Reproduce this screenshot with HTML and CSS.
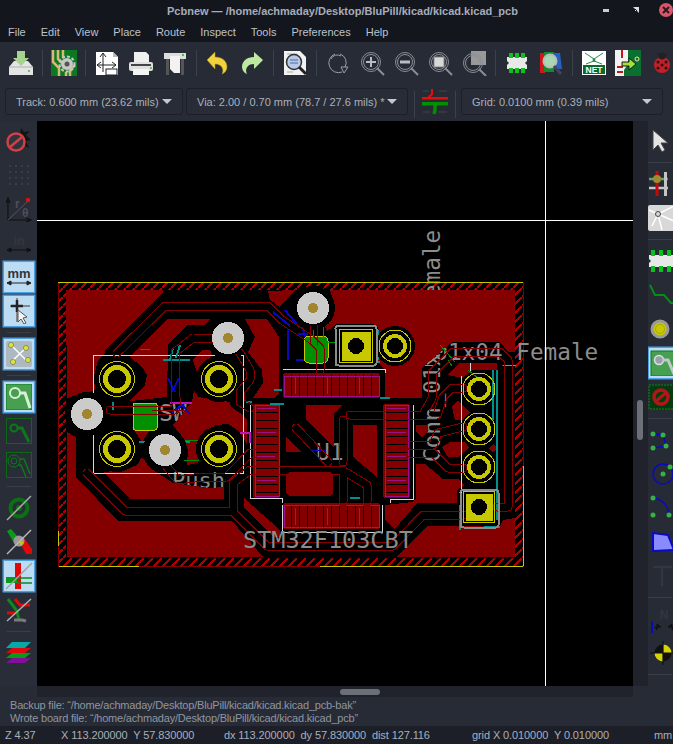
FILE: index.html
```html
<!DOCTYPE html>
<html lang="en">
<head>
    <meta charset="UTF-8">
    <meta name="viewport" content="width=device-width, initial-scale=1.0">
    <title>Pcbnew</title>
    <link rel="stylesheet" href="styles.css">
</head>
<body>
<svg class="defs" width="0" height="0">
    <defs>
        <g id="ring">
            <circle cx="11" cy="11" r="9.5" fill="none" stroke="#8a8e96" stroke-width="1"/>
            <circle cx="11" cy="11" r="7.5" fill="none" stroke="#8a8e96" stroke-width="1"/>
            <path d="M17 17L24 24" stroke="#8a8e96" stroke-width="2"/>
        </g>
        <pattern id="hatch" width="9" height="9" patternUnits="userSpaceOnUse">
            <path class="hatchline" d="M0 9L9 0"/>
        </pattern>
        <g id="tracks">
            <path d="M117 353L165 306H268L282 320L312 340L320 348V370"/>
            <path d="M193 338H214M193 338L175 352V400M110 410H175L177 400"/>
            <path d="M240 353L250 370V380L240 392V402L250 408"/>
            <path d="M87 473L125 511H233V483L250 470H342L367 485V502M343 462V420M296 428L328 462M343 470V502"/>
            <path d="M233 512L267 546H393L423 515H463"/>
            <path d="M410 445H433L438 433L463 427M410 453H433L448 468H463"/>
            <path d="M350 415H423L432 398V373L453 352H500L508 360V507H497"/>
            <path d="M410 415H437L443 397L452 388H463"/>
            <path d="M167 467L178 480L203 477H227L250 453H275"/>
        </g>
        <mask id="trackmask" maskUnits="userSpaceOnUse" x="37" y="121" width="596" height="565">
            <use href="#tracks" class="mask-outer"/>
            <use href="#tracks" class="mask-inner"/>
        </mask>
    </defs>
</svg>

<div class="window">
    <div class="titlebar">
        <span class="title">Pcbnew — /home/achmaday/Desktop/BluPill/kicad/kicad.kicad_pcb</span>
        <span class="wm wm-min"></span>
        <span class="wm wm-max"></span>
        <span class="wm wm-close">
            <svg width="8" height="8" viewBox="0 0 8 8"><path d="M1 1L7 7M7 1L1 7" stroke="#2a1a20" stroke-width="2"/></svg>
        </span>
    </div>
    <div class="menubar">
        <span>File</span><span>Edit</span><span>View</span><span>Place</span><span>Route</span><span>Inspect</span><span>Tools</span><span>Preferences</span><span>Help</span>
    </div>

    <div class="toolbar">
        <div class="tool"><svg width="26" height="26" viewBox="0 0 26 26"><path d="M1 17L6 11H20L25 17V25H1Z" fill="#e4e4e4"/><path d="M1 17H25" stroke="#b0b0b0"/><path d="M9 1H17V8H21L13 16L5 8H9Z" fill="#a6d48e"/><rect x="20" y="20" width="2" height="2" fill="#6cc070"/></svg></div>
        <i class="sep"></i>
        <div class="tool"><svg width="26" height="26" viewBox="0 0 26 26"><rect width="26" height="26" fill="#0a7a22"/><path d="M2 0V12L8 18V26M7 0V9L12 14M12 0V7M19 26V20L24 15M15 26V22" stroke="#d8b878" stroke-width="2.5" fill="none"/><circle cx="16" cy="14" r="6" fill="#c8c8c8"/><circle cx="16" cy="14" r="7.5" fill="none" stroke="#c8c8c8" stroke-width="2" stroke-dasharray="3 2"/><circle cx="16" cy="14" r="2.5" fill="#555"/></svg></div>
        <i class="sep"></i>
        <div class="tool"><svg width="24" height="25" viewBox="0 0 24 25"><path d="M1 1H18L23 6V24H1Z" fill="#fff"/><path d="M18 1V6H23" fill="#bbb"/><path d="M8 2V21M2 14H21M8 2L5 6M8 2L11 6M2 14L6 11M2 14L6 17M21 14L17 11M21 14L17 17" stroke="#222" fill="none"/><rect x="11" y="18" width="11" height="6" fill="none" stroke="#222"/></svg></div>
        <div class="tool"><svg width="26" height="25" viewBox="0 0 26 25"><path d="M6 1H18L21 4V12H6Z" fill="#f0f0f0"/><rect x="1" y="11" width="24" height="9" rx="2" fill="#e0e0e0"/><rect x="5" y="18" width="16" height="6" fill="#f4f4f4"/><rect x="3" y="13" width="20" height="2" fill="#444"/><rect x="22" y="16" width="2" height="2" fill="#5c5"/></svg></div>
        <div class="tool"><svg width="24" height="25" viewBox="0 0 24 25"><rect x="1" y="2" width="22" height="6" fill="#ddd"/><rect x="3" y="8" width="3" height="16" fill="#555"/><rect x="18" y="8" width="3" height="16" fill="#555"/><path d="M7 5H17V22H11L7 18Z" fill="#f2f2f2"/><rect x="19" y="3" width="2" height="2" fill="#3c3"/></svg></div>
        <i class="sep"></i>
        <div class="tool"><svg width="22" height="24" viewBox="0 0 22 24"><path d="M8 1V6C15 6 20 10 20 16C20 19 18 22 15 23C17 20 16 13 8 13V18L0 9Z" fill="#f2d23c" stroke="#a89020" stroke-width=".5"/></svg></div>
        <div class="tool"><svg width="24" height="24" viewBox="0 0 24 24"><path d="M14 1V6C7 6 2 10 2 16C2 19 4 22 7 23C5 20 6 13 14 13V18L23 9Z" fill="#bfe8a0"/></svg></div>
        <i class="sep"></i>
        <div class="tool"><svg width="25" height="26" viewBox="0 0 25 26"><path d="M1 1H17L23 7V25H1Z" fill="#f2f2f2"/><path d="M4 4H14M4 22H10" stroke="#aaa"/><circle cx="11" cy="12" r="7.5" fill="#b8c8e8" stroke="#333" stroke-width="1.5"/><path d="M7 10H15M7 13H15" stroke="#5068a0"/><path d="M16 17L23 24" stroke="#222" stroke-width="3"/></svg></div>
        <i class="sep"></i>
        <div class="tool dim"><svg width="22" height="24" viewBox="0 0 22 24"><path d="M8 3A9 9 0 1 0 15 21M13 3A9 9 0 0 1 18 16M4 8A7 7 0 0 1 14 5" fill="none" stroke="#9a9ea6"/><path d="M14 16H21L17 22Z" fill="none" stroke="#9a9ea6"/></svg></div>
        <div class="tool dim"><svg width="25" height="25" viewBox="0 0 25 25"><use href="#ring"/><path d="M6 11H16M11 6V16" stroke="#b8bcc4" stroke-width="2"/></svg></div>
        <div class="tool dim"><svg width="25" height="25" viewBox="0 0 25 25"><use href="#ring"/><path d="M6 11H16" stroke="#b8bcc4" stroke-width="3"/></svg></div>
        <div class="tool dim"><svg width="25" height="25" viewBox="0 0 25 25"><use href="#ring"/><rect x="6" y="6" width="10" height="10" fill="#d8d8d8" stroke="#888"/></svg></div>
        <div class="tool dim"><svg width="25" height="25" viewBox="0 0 25 25"><rect x="9" y="0" width="15" height="14" fill="#999"/><use href="#ring" y="1"/></svg></div>
        <i class="sep"></i>
        <div class="tool"><svg width="24" height="22" viewBox="0 0 24 22"><path d="M2 5H22V9L20 11L22 13V17H2V13L4 11L2 9Z" fill="#e8e8e8"/><path d="M4 1H8V6H4ZM10 1H14V6H10ZM16 1H20V6H16ZM4 16H8V21H4ZM10 16H14V21H10ZM16 16H20V21H16Z" fill="#0fc01e"/></svg></div>
        <div class="tool"><svg width="24" height="25" viewBox="0 0 24 25"><rect x="1" y="2" width="5" height="20" fill="#d01818"/><rect x="5" y="1" width="10" height="20" fill="#148a30"/><path d="M15 2H21L23 18H15Z" fill="#2860c0"/><circle cx="11" cy="10" r="6.5" fill="#a8d8b0" stroke="#bbb" stroke-width="2"/><path d="M15 15L22 23" stroke="#445" stroke-width="3"/></svg></div>
        <i class="sep"></i>
        <div class="tool"><svg width="24" height="24" viewBox="0 0 24 24"><rect width="24" height="24" fill="#fff"/><path d="M3 2L12 8L21 2M12 8V11M4 13L12 10L20 13" stroke="#2a8a4a" fill="none"/><circle cx="12" cy="9" r="1.5" fill="#2a8a4a"/><rect x="1" y="14" width="22" height="9" fill="#0a6a2a"/><text x="12" y="22" class="net">NET</text></svg></div>
        <div class="tool"><svg width="26" height="26" viewBox="0 0 26 26"><rect width="26" height="26" fill="#f2f2f2"/><path d="M13 0H26V26H9V20L13 14Z" fill="#0a7030"/><path d="M7 0V8M2 17H8M2 22H8" stroke="#c01818" stroke-width="2"/><path d="M7 12H14V8L21 14L14 20V16H7Z" fill="#9ee23c" stroke="#1a1a1a"/><circle cx="22" cy="9" r="2" fill="none" stroke="#e8e8a0"/></svg></div>
        <div class="tool"><svg width="18" height="24" viewBox="0 0 18 24"><path d="M3 2L6 5M15 2L12 5M1 12H3M15 12H17M1 18L3 16M17 18L15 16" stroke="#222"/><circle cx="9" cy="14" r="8" fill="#c02028"/><circle cx="9" cy="5" r="3.5" fill="#222"/><g fill="#2a1010"><circle cx="5" cy="11" r="1.5"/><circle cx="13" cy="11" r="1.5"/><circle cx="5" cy="17" r="1.5"/><circle cx="13" cy="17" r="1.5"/><circle cx="9" cy="14" r="1.5"/></g></svg></div>
    </div>

    <div class="auxbar">
        <div class="combo combo-track"><span>Track: 0.600 mm (23.62 mils)</span><b class="caret"></b></div>
        <div class="combo combo-via"><span>Via: 2.00 / 0.70 mm (78.7 / 27.6 mils) *</span><b class="caret"></b></div>
        <i class="sep sep-aux"></i>
        <div class="route-width"><svg width="28" height="28" viewBox="0 0 28 28"><path d="M11 1V6L7 10" stroke="#e01010" stroke-width="2" fill="none"/><rect x="1" y="9" width="26" height="2.5" fill="#e01010"/><rect x="1" y="14" width="26" height="3.5" fill="#009000"/><path d="M14 17L14 22L13 26" stroke="#009000" stroke-width="3.5" fill="none"/><path d="M2 3H8M18 3H26M2 24H9M17 24H26" stroke="#444" /></svg></div>
        <i class="sep sep-aux"></i>
        <div class="combo combo-grid"><span>Grid: 0.0100 mm (0.39 mils)</span><b class="caret"></b></div>
    </div>

    <div class="main">
        <div class="sidebar">
            <div class="side-btn"><svg width="28" height="26" viewBox="0 0 28 26"><path d="M16 0L19 4L25 3L21 7L26 12L21 13L24 20L18 17L14 20Z" fill="#141414"/><circle cx="11" cy="14" r="8.5" fill="#30343e" stroke="#d04046" stroke-width="2.5"/><path d="M5 19L17 9" stroke="#d04046" stroke-width="2.5"/></svg></div>
            <div class="side-btn"><svg class="faint" width="24" height="24" viewBox="0 0 24 24"><g fill="#555"><circle cx="3" cy="3" r="1"/><circle cx="9" cy="3" r="1"/><circle cx="15" cy="3" r="1"/><circle cx="21" cy="3" r="1"/><circle cx="3" cy="9" r="1"/><circle cx="9" cy="9" r="1"/><circle cx="15" cy="9" r="1"/><circle cx="21" cy="9" r="1"/><circle cx="3" cy="15" r="1"/><circle cx="9" cy="15" r="1"/><circle cx="15" cy="15" r="1"/><circle cx="21" cy="15" r="1"/><circle cx="3" cy="21" r="1"/><circle cx="9" cy="21" r="1"/><circle cx="15" cy="21" r="1"/><circle cx="21" cy="21" r="1"/></g></svg></div>
            <div class="side-btn"><svg width="26" height="26" viewBox="0 0 26 26"><path d="M2 24V2M2 24H25M0 7L2 2L4 7M20 22L25 24L20 26" stroke="#111" stroke-width="1.2" fill="none"/><path d="M2 24L21 6" stroke="#555"/><circle cx="22" cy="4" r="2.2" fill="#e01010"/><text x="9" y="12" class="polar">r</text><text x="16" y="21" class="polar">θ</text></svg></div>
            <div class="side-btn"><svg width="26" height="26" viewBox="0 0 26 26"><text x="13" y="15" class="unit unit-dim">in</text><path d="M1 20H25M1 20L5 18V22ZM25 20L21 18V22Z" stroke="#111" fill="#111"/></svg></div>
            <div class="side-btn on"><svg width="26" height="26" viewBox="0 0 26 26"><text x="13" y="14" class="unit">mm</text><path d="M1 19H25M1 19L5 17V21ZM25 19L21 17V21Z" stroke="#222" fill="#222"/></svg></div>
            <div class="side-btn on"><svg width="26" height="26" viewBox="0 0 26 26"><path d="M4 8H24M11 0V24" stroke="#888" stroke-width="2"/><path d="M5 8H17M11 2V14" stroke="#222" stroke-width="2.5"/><path d="M12 12L12 24L15 21L18 26L20 25L17 20L21 19Z" fill="#f4f4f4" stroke="#555"/></svg></div>
            <i class="hsep"></i>
            <div class="side-btn on"><svg width="28" height="28" viewBox="0 0 28 28"><rect x="1" y="1" width="26" height="26" rx="2" fill="#aeb8c0"/><path d="M6 5L22 21M7 21L22 7" stroke="#fff" stroke-width="1.5"/><g fill="#d8e830" stroke="#555" stroke-width=".5"><circle cx="6" cy="5" r="2.6"/><circle cx="21" cy="8" r="2.6"/><circle cx="8" cy="22" r="2.6"/><circle cx="23" cy="20" r="2.6"/></g></svg></div>
            <i class="hsep"></i>
            <div class="side-btn on"><svg width="26" height="26" viewBox="0 0 26 26"><rect width="26" height="26" fill="#46a050" stroke="#0a7a20"/><circle cx="9" cy="9" r="5" fill="none" stroke="#d8f0d8" stroke-width="2"/><path d="M14 9H19L24 24" fill="none" stroke="#d8f0d8" stroke-width="3"/></svg></div>
            <div class="side-btn"><svg width="26" height="26" viewBox="0 0 26 26"><rect x=".5" y=".5" width="25" height="25" fill="none" stroke="#0a6a12"/><circle cx="8" cy="10" r="3.5" fill="none" stroke="#0a7a18" stroke-width="2"/><path d="M12 10H16L23 24" fill="none" stroke="#0a7a18" stroke-width="3"/></svg></div>
            <div class="side-btn"><svg width="26" height="26" viewBox="0 0 26 26"><rect x=".5" y=".5" width="25" height="25" fill="none" stroke="#0a6a12"/><circle cx="8" cy="9" r="3" fill="none" stroke="#0a7a18"/><circle cx="8" cy="9" r="6" fill="none" stroke="#0a7a18"/><path d="M14 7H18L24 22M12 13H15L20 25" fill="none" stroke="#0a7a18" stroke-width="1.5"/></svg></div>
            <i class="hsep"></i>
            <div class="side-btn"><svg width="26" height="26" viewBox="0 0 26 26"><circle cx="13" cy="13" r="8.5" fill="none" stroke="#0a7012" stroke-width="4"/><circle cx="13" cy="13" r="3" fill="#0a7012"/><path d="M1 25L25 1" stroke="#a8a8a8" stroke-width="1.5"/></svg></div>
            <div class="side-btn"><svg width="28" height="26" viewBox="0 0 28 26"><path d="M2 2L6 0L14 9L9 14Z" fill="#0a9a18"/><path d="M15 14L19 9L27 20V25H21Z" fill="#e00808"/><circle cx="14" cy="12" r="5.5" fill="#9a9a9a"/><path d="M14 12L19 13L16 17Z" fill="#c8c800"/><path d="M2 25L26 1" stroke="#b8b8b8" stroke-width="1.5"/></svg></div>
            <div class="side-btn on"><svg width="28" height="28" viewBox="0 0 28 28"><rect x="10" y="1" width="6" height="26" fill="#e00808"/><rect x="1" y="15" width="11" height="6" fill="#0a9a18"/><path d="M12 16H27M12 21H27" stroke="#0a8a18" stroke-width="1.5"/><path d="M1 27L27 1" stroke="#a0a0a0" stroke-width="1.5"/></svg></div>
            <div class="side-btn"><svg width="26" height="26" viewBox="0 0 26 26"><path d="M2 2L11 14L13 24" fill="none" stroke="#0a8a18" stroke-width="3"/><path d="M9 2L14 8H24" fill="none" stroke="#e00808" stroke-width="3"/><path d="M1 16H9" stroke="#e00808" stroke-width="3"/><path d="M8 23H16L20 24" fill="none" stroke="#7a7a7a" stroke-width="3"/><path d="M1 24L25 2" stroke="#b0b0b0" stroke-width="1.5"/></svg></div>
            <i class="hsep"></i>
            <div class="side-btn"><svg width="28" height="26" viewBox="0 0 28 26"><path d="M1 23L7 18H26L20 23Z" fill="#80109a"/><path d="M1 18L7 13H26L20 18Z" fill="#0a9a18"/><path d="M1 13L7 8H26L20 13Z" fill="#e00808"/><path d="M1 8L7 2H26L20 8Z" fill="#08a8a8"/></svg></div>
        </div>

        <div class="canvas">
            <svg class="board" width="596" height="565" viewBox="37 121 596 565">
                <path class="hatchfill" fill-rule="evenodd" d="M58 282H523V567H58ZM66 290H515V558H66Z"/>
                <rect class="edge" x="58.5" y="282.5" width="465" height="284"/>

                <!-- silk text under the copper -->
                <text class="silk silk-value" x="366" y="360">Conn_01x04_Female</text>
                <text class="silk silk-value" transform="translate(440 462) rotate(-90)">Conn_01x04_Female</text>
                <text class="silk silk-ref" x="316" y="460">U1</text>
                <text class="silk silk-ref" x="159" y="421">SW</text>
                <text class="silk silk-push" x="172" y="488">Push</text>

                <!-- copper fills -->
                <g class="cu">
                    <path d="M66 290H163V293L105 350V353L98 360L95 372L95 390L67 398Z"/>
                    <path d="M67 432L76 437V477L118 521H232L263 557H67Z"/>
                    <path d="M397 557L427 526H500L503 520L515 518V557Z"/>
                    <path d="M167 319H210L205 325H187L168 345L167 397L130 401L145 385L147 375L142 367L130 357Z"/>
                    <path d="M193 360L202 350H210L212 355L197 373ZM194 390L198 397L230 402L231 407L240 413L247 420V445L240 432L228 424L215 425L205 435L198 463L187 465L188 450L183 438L173 425L183 413L192 402Z"/>
                    <path d="M132 427H152L142 442Z"/>
                    <path d="M103 472L125 470L137 465L142 457L150 468L173 483L210 488L224 487V499H130Z"/>
                    <path d="M244 498L280 530V537H273L244 507Z"/>
                    <path d="M245 319H267L279 337V393L274 398H253L263 383L262 370L248 352L255 337Z"/>
                    <path d="M268 291L295 290L280 307L270 300Z"/>
                    <path d="M330 290H515V352H508L500 342H452L422 368V398H385V370L378 362V327L373 324H337L327 331L325 327L335 307Z"/>
                    <path d="M447 375L460 363H497V370H473L462 378Z"/>
                    <path d="M452 407L458 400L470 413L462 420H455Z"/>
                    <path d="M442 447L450 442H465L469 448L458 457H448Z"/>
                    <path d="M489 448L493 444L497 448L493 453Z"/>
                    <path d="M416 425H428V432L422 437L416 432Z"/>
                    <path d="M416 464H425L443 479H458L465 485L457 490V503H417L395 529L385 520V505L413 502L416 498Z"/>
                    <path d="M353 425H377V477L353 457Z"/>
                    <path d="M306 405H342L334 413V448L306 420Z"/>
                    <path d="M289 472H330L333 475V493L330 496H289L286 493V475Z"/>
                    <path d="M286 437L302 452H286Z"/>
                </g>

                <!-- QFP pad rows -->
                <rect class="cu" x="283" y="373" width="97" height="25" rx="3"/>
                <rect class="cu" x="283" y="503" width="97" height="26" rx="3"/>
                <rect class="cu" x="253" y="404" width="27" height="94" rx="3"/>
                <rect class="cu" x="383" y="404" width="27" height="94" rx="3"/>
                <path class="gap-v" d="M291 385.5H380M291 516H380"/>
                <path class="gap-h" d="M266.5 412V498M396.5 412V498"/>
                <path class="lead-v" d="M295 385.5H380M295 516H380"/>
                <path class="lead-h" d="M266.5 408V498M396.5 408V498"/>
                <path class="purple" d="M284 376H379V396H284ZM284 505H379V527H284ZM255 405H279V496H255ZM385 405H408V496H385Z"/>

                <!-- F.Silk courtyard lines -->
                <g class="white">
                    <path d="M93 473V355H243V473Z"/>
                    <path d="M283 369H385V373M282 532H382V505M282 532V505M250 405V498H282V503M413 405V499H390V503"/>
                    <path d="M470 363V372M461 376V527M497 370V520"/>
                </g>

                <!-- teal / blue back-side graphics -->
                <g class="teal">
                    <path d="M173 348L170 360M180 345L176 358M163 360H190M113 400V410M115 427V450M139 442H190M270 404H284M380 362H340M378 330V360M282 390H274M380 398H390M252 402H246M350 498H360M493 370V420M497 370V520M484 527H500M460 505V530"/>
                </g>
                <g class="bluesilk">
                    <path d="M168 378L175 392M179 378L172 392M273 312L290 326M285 310L300 328M300 320L306 338M298 334H307V360H296M172 412L182 405L190 414M288 330V360"/>
                </g>
                <path class="bluedim" d="M311 450H325M319 446V458"/>
                <g class="magenta">
                    <path d="M170 403H192M240 433H250V443"/>
                </g>
                <rect class="greenpad" x="304" y="336" width="24" height="27" rx="5"/>
                <rect class="greenpad" x="133" y="403" width="24" height="27" rx="2"/>
                <g class="greenline">
                    <path d="M243 333H232M243 342H232M206 386H228M206 392H228M140 349H150M157 460H210M183 440H205M313 325V340M323 325V340M328 342H345M440 345L455 362M448 360L452 366M468 370L478 378"/>
                </g>

                <!-- through hole pads and vias -->
                <g class="clear">
                    <circle cx="117" cy="379" r="23"/><circle cx="219" cy="379" r="23"/>
                    <circle cx="117" cy="449" r="23"/><circle cx="219" cy="449" r="23"/>
                    <circle cx="87" cy="414" r="22"/><circle cx="228" cy="338" r="22"/>
                    <circle cx="165" cy="450" r="22"/><circle cx="313" cy="308" r="22"/>
                    <circle cx="395" cy="346" r="20"/><rect x="336" y="326" width="40" height="40" rx="4"/>
                </g>

                <!-- tracks, drawn in outline mode -->
                <use href="#tracks" class="track-outer" mask="url(#trackmask)"/>

                <rect class="padbox" x="335.5" y="325.5" width="41" height="40" rx="3"/>
                <rect class="padbox" x="460.5" y="489.5" width="38" height="38" rx="3"/>
                <g class="pad">
                    <circle cx="117" cy="379" r="14"/><circle cx="219" cy="379" r="14"/>
                    <circle cx="117" cy="449" r="14"/><circle cx="219" cy="449" r="14"/>
                    <circle cx="395" cy="346" r="12"/><circle cx="479" cy="389" r="12"/>
                    <circle cx="479" cy="429" r="12"/><circle cx="479" cy="467" r="12"/>
                    <rect x="342" y="332" width="29" height="29"/><rect x="466" y="494" width="27" height="27"/>
                </g>
                <g class="padring">
                    <circle cx="117" cy="379" r="17.5"/><circle cx="219" cy="379" r="17.5"/>
                    <circle cx="117" cy="449" r="17.5"/><circle cx="219" cy="449" r="17.5"/>
                    <circle cx="395" cy="346" r="16"/><circle cx="479" cy="389" r="16"/>
                    <circle cx="479" cy="429" r="16"/><circle cx="479" cy="467" r="16"/>
                    <rect x="339.5" y="329.5" width="33" height="33"/><rect x="463.5" y="491.5" width="31" height="31"/>
                </g>
                <g class="holes">
                    <circle cx="117" cy="379" r="9"/><circle cx="219" cy="379" r="9"/>
                    <circle cx="117" cy="449" r="9"/><circle cx="219" cy="449" r="9"/>
                    <circle cx="395" cy="346" r="8"/><circle cx="356" cy="346" r="8"/>
                    <circle cx="479" cy="389" r="8"/><circle cx="479" cy="429" r="8"/>
                    <circle cx="479" cy="467" r="8"/><circle cx="479" cy="507" r="8"/>
                </g>
                <g class="via">
                    <circle cx="87" cy="414" r="16"/><circle cx="228" cy="338" r="16"/>
                    <circle cx="165" cy="450" r="16"/><circle cx="313" cy="308" r="16"/>
                </g>
                <g class="drill">
                    <circle cx="87" cy="414" r="5"/><circle cx="228" cy="338" r="5"/>
                    <circle cx="165" cy="450" r="5"/><circle cx="313" cy="308" r="5"/>
                </g>
                <g class="trackover">
                    <path d="M310 325V345M317 325V345M152 410H185"/>
                </g>

                <text class="silk silk-stm" x="243" y="548">STM32F103CBT</text>

                <path class="edge-yellow" d="M58 282.5H523M58.5 531V546M59 566.5H139M320 566.5H523M523.5 466V566"/>
                <path class="crosshair" d="M545.5 121V686M37 220.5H633"/>
            </svg>
        </div>

        <div class="vscroll"><span class="vthumb"></span></div>

        <div class="sidebar sidebar-right">
            <div class="side-btn"><svg width="26" height="26" viewBox="0 0 26 26"><path d="M5 2V22L10 17L14 24L17 22L13 15L20 15Z" fill="#e4e4e4" stroke="#444"/></svg></div>
            <i class="hsep"></i>
            <div class="side-btn"><svg width="32" height="26" viewBox="0 0 32 26"><path d="M1 8H20" stroke="#58a860" stroke-width="2.5"/><path d="M1 17H20" stroke="#c4c4c4" stroke-width="2.5"/><path d="M9 0V25" stroke="#c80808" stroke-width="3"/><rect x="16" y="1" width="3" height="24" fill="#c4c4c4"/><circle cx="9" cy="8" r="4" fill="#a08a30"/></svg></div>
            <div class="side-btn"><svg width="32" height="28" viewBox="0 0 32 28"><rect x="0" y="1" width="32" height="26" rx="2" fill="#d8d8d8"/><path d="M10 10L1 6M10 10L26 2M10 10L14 26M10 10L4 22M10 10L28 18" stroke="#fff" stroke-width="1.5"/><circle cx="10" cy="10" r="2.5" fill="#d8d8d8" stroke="#444"/></svg></div>
            <i class="hsep"></i>
            <div class="side-btn"><svg width="32" height="24" viewBox="0 0 32 24"><path d="M1 6H32V18H1V14L3 12L1 10Z" fill="#e8e8e8"/><path d="M3 1H7V7H3ZM11 1H15V7H11ZM19 1H23V7H19ZM3 17H7V23H3ZM11 17H15V23H11ZM19 17H23V23H19Z" fill="#0cc01c"/></svg></div>
            <div class="side-btn"><svg width="32" height="24" viewBox="0 0 32 24"><path d="M2 2L7 12H16L23 20H28" fill="none" stroke="#0a8a18" stroke-width="2"/></svg></div>
            <div class="side-btn"><svg width="32" height="26" viewBox="0 0 32 26"><circle cx="12" cy="13" r="8" fill="#c8c800" stroke="#999" stroke-width="3"/><circle cx="12" cy="13" r="4.5" fill="#c8c800" stroke="#a8a800"/></svg></div>
            <div class="side-btn on"><svg width="30" height="26" viewBox="0 0 30 26"><rect x="1" y="1" width="30" height="25" fill="#46a050" stroke="#0a7a20"/><circle cx="9" cy="10" r="4.5" fill="#9aa2a8" stroke="#dde" stroke-width="1.5"/><path d="M13 10H18L24 24" fill="none" stroke="#c0c8cc" stroke-width="3"/></svg></div>
            <div class="side-btn"><svg width="32" height="26" viewBox="0 0 32 26"><rect x="1" y="1" width="30" height="24" fill="#083a10" stroke="#0a8a18" stroke-dasharray="2 1"/><circle cx="13" cy="13" r="7" fill="none" stroke="#b01818" stroke-width="3.5"/><path d="M7 18L19 8" stroke="#b01818" stroke-width="3"/></svg></div>
            <i class="hsep"></i>
            <div class="side-btn"><svg width="32" height="26" viewBox="0 0 32 26"><path d="M5 7L15 8L18 19L5 21" fill="none" stroke="#0a0ac0" stroke-width="1.5"/><g fill="#38b048"><circle cx="5" cy="7" r="2.5"/><circle cx="15" cy="8" r="2.5"/><circle cx="18" cy="19" r="2.5"/><circle cx="5" cy="21" r="2.5"/></g></svg></div>
            <div class="side-btn"><svg width="32" height="26" viewBox="0 0 32 26"><circle cx="15" cy="13" r="10" fill="none" stroke="#0a0ac0" stroke-width="1.5"/><g fill="#38b048"><circle cx="15" cy="13" r="2.5"/><circle cx="22" cy="6" r="2.5"/></g></svg></div>
            <div class="side-btn"><svg width="32" height="26" viewBox="0 0 32 26"><path d="M5 3C14 4 20 10 21 20" fill="none" stroke="#0a0ac0" stroke-width="1.5"/><g fill="#38b048"><circle cx="5" cy="3" r="2.5"/><circle cx="5" cy="20" r="2.5"/><circle cx="21" cy="20" r="2.5"/></g></svg></div>
            <div class="side-btn"><svg width="32" height="24" viewBox="0 0 32 24"><path d="M5 3L20 5L26 20L5 21Z" fill="#8a8aff" stroke="#0a0ac0" stroke-width="2"/></svg></div>
            <div class="side-btn"><svg width="32" height="24" viewBox="0 0 32 24"><path d="M5 3H24M14 3V22" stroke="#33363e" stroke-width="2.5"/></svg></div>
            <i class="hsep"></i>
            <div class="side-btn"><svg width="32" height="28" viewBox="0 0 32 28"><text x="16" y="14" class="dimtext">N</text><path d="M4 16V28" stroke="#0a0ac0" stroke-width="2"/><path d="M7 22H13L9 19V25ZM30 22H20L24 19V25Z" fill="#111" stroke="#111"/></svg></div>
            <div class="side-btn"><svg width="32" height="26" viewBox="0 0 32 26"><circle cx="15" cy="13" r="8.5" fill="#111"/><path d="M15 13V4.5A8.5 8.5 0 0 1 23.5 13ZM15 13V21.5A8.5 8.5 0 0 1 6.5 13Z" fill="#d4d400"/><path d="M2 13H28M15 1V25" stroke="#111" stroke-width="1.2"/></svg></div>
            <i class="hsep"></i>
        </div>
    </div>

    <div class="hscroll"><span class="hthumb"></span></div>

    <div class="messages">
        <div>Backup file: “/home/achmaday/Desktop/BluPill/kicad/kicad.kicad_pcb-bak”</div>
        <div>Wrote board file: “/home/achmaday/Desktop/BluPill/kicad/kicad.kicad_pcb”</div>
    </div>

    <div class="statusbar">
        <span class="st-zoom">Z 4.37</span>
        <span class="st-abs">X 113.200000&nbsp; Y 57.830000</span>
        <span class="st-rel">dx 113.200000&nbsp; dy 57.830000&nbsp; dist 127.116</span>
        <span class="st-grid">grid X 0.010000&nbsp; Y 0.010000</span>
        <span class="st-unit">mm</span>
    </div>
</div>
</body>
</html>
```

FILE: styles.css
```css
* {
    box-sizing: border-box;
}
html, body {
    margin: 0;
    height: 100%;
    background-color: #fff;
    overflow: hidden;
}
body {
    font-family: "Liberation Sans", Arial, sans-serif;
    font-size: 11px;
    color: #b4bac6;
}
.defs {
    display: block;
    height: 0;
}
.window {
    width: 673px;
    height: 744px;
    display: flex;
    flex-direction: column;
    background-color: #272b35;
    overflow: hidden;
}

/* title and menu */
.titlebar {
    height: 21px;
    background-color: #14161d;
    display: flex;
    align-items: center;
    flex: none;
    position: relative;
    padding-left: 167px;
}
.title {
    font-weight: bold;
    color: #a6adba;
    font-size: 11px;
}
.wm {
    position: absolute;
    top: 3px;
}
.wm-min {
    left: 603px;
    top: 9px;
    width: 6px;
    height: 3px;
    background-color: #c8ccd4;
}
.wm-max {
    left: 633px;
    top: 7px;
    width: 6px;
    height: 6px;
    background: linear-gradient(135deg, #14161d 48%, #d8dce4 48%, #d8dce4 52%, #14161d 52%);
    border: 2px solid #d8dce4;
    border-left-color: #14161d;
    border-bottom-color: #14161d;
}
.wm-close {
    left: 659px;
    width: 14px;
    height: 14px;
    border-radius: 50%;
    background-color: #d9566a;
    display: flex;
    align-items: center;
    justify-content: center;
}
.menubar {
    height: 21px;
    background-color: #14161d;
    display: flex;
    align-items: center;
    gap: 15px;
    flex: none;
    padding-left: 8px;
    color: #bcc2cc;
}

/* toolbars */
.toolbar {
    height: 42px;
    display: flex;
    align-items: center;
    padding-left: 4px;
    flex: none;
    overflow: hidden;
}
.tool {
    width: 34px;
    flex: none;
    display: flex;
    justify-content: center;
    align-items: center;
}
.tool svg {
    display: block;
}
.sep {
    width: 9px;
    flex: none;
    align-self: center;
    height: 26px;
    background: linear-gradient(#3c414c, #3c414c) center / 1px 100% no-repeat;
}
.net {
    font: bold 8.5px "Liberation Sans", sans-serif;
    fill: #fff;
    text-anchor: middle;
}
.auxbar {
    height: 37px;
    display: flex;
    align-items: flex-start;
    padding: 4px 0 0 5px;
    flex: none;
}
.combo {
    height: 27px;
    border: 1px solid #1c1f27;
    border-radius: 3px;
    background-color: #282c36;
    display: flex;
    align-items: center;
    justify-content: space-between;
    padding: 0 10px;
    color: #aab1bd;
    white-space: nowrap;
}
.combo-track {
    width: 178px;
    margin-right: 3px;
}
.combo-via {
    width: 222px;
    margin-right: 2px;
}
.combo-grid {
    width: 202px;
    margin-left: 1px;
}
.caret {
    width: 0;
    height: 0;
    border-left: 5px solid transparent;
    border-right: 5px solid transparent;
    border-top: 5px solid #c4c8d0;
}
.sep-aux {
    height: 27px;
}
.route-width {
    width: 34px;
    height: 27px;
    display: flex;
    justify-content: center;
    align-items: center;
    margin: 0 -1px;
}

/* middle area */
.main {
    height: 565px;
    display: flex;
    flex: none;
}
.sidebar {
    width: 37px;
    flex: none;
    display: flex;
    flex-direction: column;
    align-items: center;
    padding-top: 3px;
    background-color: #292d38;
}
.sidebar-right {
    width: 26px;
    align-items: flex-start;
    background-color: #272b35;
    border-left: 1px solid #1f222a;
    overflow: hidden;
}
.side-btn {
    width: 32px;
    height: 34px;
    flex: none;
    display: flex;
    align-items: center;
    justify-content: center;
    position: relative;
}
.sidebar-right .side-btn {
    justify-content: flex-start;
}
.side-btn svg {
    display: block;
    flex: none;
}
.side-btn.on {
    height: 32px;
    margin: 1px 0;
    background-color: #bcdcf4;
    border: 1px solid #4aa0e0;
    box-shadow: 0 0 0 .5px #4aa0e0;
}
.sidebar-right .side-btn.on {
    padding-left: 1px;
}
.hsep {
    display: block;
    width: 24px;
    height: 9px;
    flex: none;
    background: linear-gradient(#3a3e48, #3a3e48) center / 100% 1px no-repeat;
}
.faint {
    opacity: .55;
}
.polar {
    font: bold 12px "Liberation Sans", sans-serif;
    fill: #4c4f58;
}
.unit {
    font: bold 13px "Liberation Sans", sans-serif;
    fill: #333;
    text-anchor: middle;
}
.unit-dim {
    fill: #33363e;
}
.dimtext {
    font: bold 12px "Liberation Sans", sans-serif;
    fill: #33363e;
    text-anchor: middle;
}
.canvas {
    width: 596px;
    flex: none;
    background-color: #000;
    overflow: hidden;
}
.board {
    display: block;
    shape-rendering: crispEdges;
}
.vscroll {
    width: 14px;
    flex: none;
    background-color: #20232b;
    position: relative;
}
.vthumb {
    position: absolute;
    left: 4px;
    top: 279px;
    width: 6px;
    height: 40px;
    border-radius: 3px;
    background-color: #6b6f78;
}
.hscroll {
    height: 11px;
    flex: none;
    background-color: #20232b;
    margin: 0 40px 0 37px;
    position: relative;
}
.hthumb {
    position: absolute;
    left: 303px;
    top: 3px;
    width: 40px;
    height: 6px;
    border-radius: 3px;
    background-color: #6b6f78;
}
.messages {
    height: 29px;
    flex: none;
    padding: 2px 0 0 10px;
    font-size: 11px;
    line-height: 13px;
    letter-spacing: -.2px;
    color: #8f95a1;
}
.statusbar {
    height: 18px;
    flex: none;
    background-color: #1c1f28;
    display: flex;
    align-items: center;
    font-size: 11px;
    letter-spacing: -.1px;
    color: #a9afbb;
    position: relative;
}
.st-zoom {
    margin-left: 5px;
    width: 56px;
}
.st-abs {
    width: 163px;
}
.st-rel {
    width: 248px;
}
.st-grid {
    width: 182px;
}

/* board drawing */
.hatchline {
    stroke: #b00000;
    stroke-width: 1.5;
    shape-rendering: crispEdges;
}
.hatchfill {
    fill: url(#hatch);
}
.edge {
    fill: none;
    stroke: #840000;
}
.edge-yellow {
    fill: none;
    stroke: #c8c800;
}
.cu {
    fill: #840000;
}
.silk {
    fill: #8c8c8c;
    font-family: "DejaVu Sans Mono", monospace;
}
.silk-value {
    font-size: 22.7px;
}
.silk-ref {
    font-size: 23px;
}
.silk-push {
    font-size: 22px;
}
.silk-stm {
    font-size: 23.5px;
}
.gap-v {
    fill: none;
    stroke: #000;
    stroke-width: 21;
    stroke-dasharray: 1 7;
}
.gap-h {
    fill: none;
    stroke: #000;
    stroke-width: 23;
    stroke-dasharray: 1 7;
}
.lead-v {
    fill: none;
    stroke: #9a1088;
    stroke-width: 17;
    stroke-dasharray: 1 31;
}
.lead-h {
    fill: none;
    stroke: #9a1088;
    stroke-width: 19;
    stroke-dasharray: 1 23;
}
.purple {
    fill: none;
    stroke: #9a1088;
}
.white {
    fill: none;
    stroke: #d8d8d8;
}
.teal {
    fill: none;
    stroke: #009090;
    stroke-width: 2;
}
.bluesilk {
    fill: none;
    stroke: #0808c0;
    stroke-width: 2;
}
.bluedim {
    fill: none;
    stroke: #0808c0;
}
.magenta {
    fill: none;
    stroke: #c010c0;
    stroke-width: 2;
}
.greenpad {
    fill: #009000;
    stroke: #c8c800;
}
.greenline {
    fill: none;
    stroke: #009000;
}
.track-outer {
    fill: none;
    stroke: #840000;
    stroke-width: 9;
    stroke-linejoin: round;
    stroke-linecap: round;
}
.mask-outer {
    fill: none;
    stroke: #fff;
    stroke-width: 9;
    stroke-linejoin: round;
    stroke-linecap: round;
    shape-rendering: crispEdges;
}
.mask-inner {
    fill: none;
    stroke: #000;
    stroke-width: 7;
    stroke-linejoin: round;
    stroke-linecap: round;
    shape-rendering: crispEdges;
}
.trackover {
    fill: none;
    stroke: #840000;
}
.clear {
    fill: #000;
}
.padbox {
    fill: none;
    stroke: #8c8c8c;
    stroke-width: 2;
}
.pad {
    fill: #c8c800;
}
.padring {
    fill: none;
    stroke: #c8c800;
}
.holes {
    fill: #000;
}
.via {
    fill: #cbcbcb;
}
.drill {
    fill: #a08630;
}
.crosshair {
    fill: none;
    stroke: #fff;
}
```
